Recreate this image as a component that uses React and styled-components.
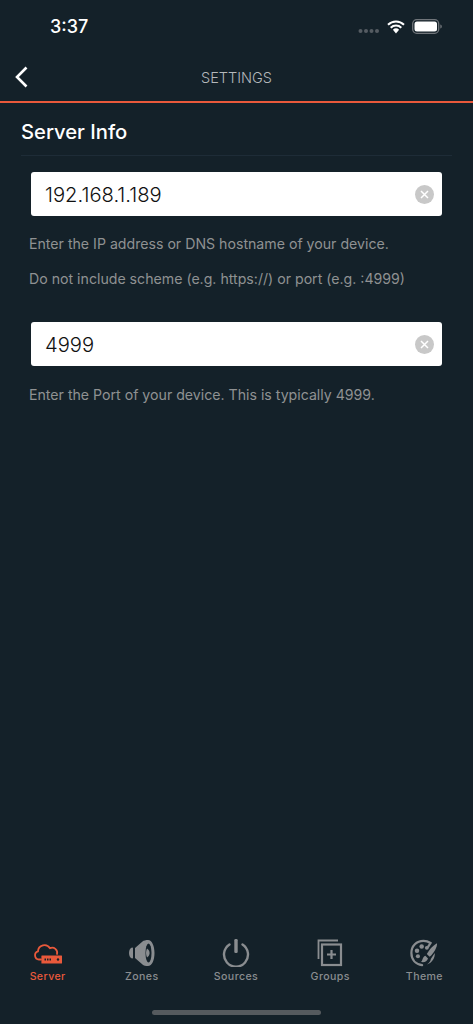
import React from 'react'
import styled, { createGlobalStyle } from 'styled-components'

const GlobalStyle = createGlobalStyle`
html, body {
  margin: 0;
  padding: 0;
  background: #142129;
}
* {
  box-sizing: border-box;
}
`

const Screen = styled.div`
width: 473px;
height: 1024px;
background: #142129;
color: #fff;
font-family: Inter, "Liberation Sans", sans-serif;
display: flex;
flex-direction: column;
overflow: hidden;
`

// --status bar --
const StatusBar = styled.div`
height: 53px;
flex-shrink: 0;
display: flex;
align-items: center;
justify-content: space-between;
padding: 0 31px 0 50px;
`
const Time = styled.span`
font-size: 18px;
font-weight: 500;
`
const StatusIcons = styled.div`
display: flex;
align-items: center;
gap: 7px;
`
const SignalDots = styled.svg`
margin-top: 8px;
`

// --nav bar --
const NavBar = styled.div`
height: 50px;
flex-shrink: 0;
display: flex;
align-items: center;
justify-content: center;
position: relative;
border-bottom: 2.5px solid #e9593b;
`
const BackButton = styled.svg`
position: absolute;
left: 14px;
top: 11px;
`
const NavTitle = styled.span`
font-size: 14.5px;
font-weight: 300;
color: #b4b8bb;
`

// --content --
const Content = styled.div`
flex: 1;
padding: 0 21px;
`
const Heading = styled.div`
height: 53px;
display: flex;
align-items: center;
padding-top: 4px;
font-size: 20.2px;
font-weight: 500;
border-bottom: 1px solid #1e2c37;
`
const Field = styled.div`
margin: ${props => props.$top}px 10px 0;
height: 44px;
background: #fff;
border-radius: 3px;
display: flex;
align-items: center;
padding: 0 8px 0 14px;
`
const FieldInput = styled.input`
flex: 1;
min-width: 0;
border: 0;
outline: 0;
padding: 0;
background: transparent;
font-family: inherit;
font-size: 20.2px;
font-weight: 300;
color: #111;
`
const ClearButton = styled.span`
width: 19px;
height: 19px;
border-radius: 50%;
background: #c8c8c8;
display: flex;
align-items: center;
justify-content: center;
`
const Help = styled.p`
margin: ${props => props.$top}px 8px 0;
font-size: 14.15px;
line-height: 18px;
color: #8f9192;
`

// --tab bar --
const TabBar = styled.div`
height: 73.5px;
flex-shrink: 0;
display: flex;
padding: 0 1.5px 0 0.5px;
`
const Tab = styled.div`
flex: 1;
display: flex;
flex-direction: column;
align-items: center;
justify-content: flex-end;
gap: 3px;
color: ${props => (props.$active ? '#e9593b' : '#8a8d90')};
`
const TabIcon = styled.svg`
display: block;
`
const TabLabel = styled.span`
font-size: 10.6px;
font-weight: 500;
letter-spacing: 0.4px;
line-height: 13px;
`
const HomeArea = styled.div`
height: 41.5px;
flex-shrink: 0;
display: flex;
justify-content: center;
padding-top: 27.5px;
`
const HomeBar = styled.div`
width: 169px;
height: 5px;
border-radius: 3px;
background: #555a5e;
`

const ServerIcon = () => (
    <TabIcon width="30" height="24" viewBox="0 0 30 24">
        <path d="M8 16.500H6A4.200 4.200 0 0 1 5 8.300 6.500 6.500 0 0 1 17 5.200 5 5 0 0 1 24 11" fill="none" stroke="currentColor" strokeWidth="1.800" strokeLinecap="round" />
        <rect x="8.400" y="12.500" width="20.600" height="8" rx="0.500" fill="currentColor" />
        <rect x="11.500" y="15.500" width="1.500" height="2" fill="#142129" />
        <rect x="14" y="15.500" width="1.500" height="2" fill="#142129" />
        <rect x="16.500" y="15.500" width="1.500" height="2" fill="#142129" />
        <circle cx="25" cy="16.500" r="1.200" fill="#142129" />
    </TabIcon>
)

const ZonesIcon = () => (
    <TabIcon width="30" height="28" viewBox="1 0 30 28">
        <path d="M6 8.500c-2 .5-3 3-3 5.500s1 5 3 5.500c.6 0 1-.4 1-1V9.500c0-.6-.4-1-1-1z" fill="currentColor" />
        <path d="M9 9l7.500-6.500C17.500 1.500 20 1 22 1c4 0 6.500 6 6.500 13S26 27 22 27c-2 0-4.500-.5-5.500-1.500L9 19z" fill="currentColor" />
        <ellipse cx="22.500" cy="14" rx="3" ry="9.500" fill="#142129" />
        <path d="M21 9.500c1.800 1 2.600 2.800 2.600 4.500s-.8 3.500-2.600 4.500c-.6-1.300-1-2.900-1-4.500s.4-3.200 1-4.500z" fill="currentColor" />
    </TabIcon>
)

const SourcesIcon = () => (
    <TabIcon width="30" height="28" viewBox="0 0 30 28">
        <path d="M8.500 5.500a12 12 0 1 0 13 0" fill="none" stroke="currentColor" strokeWidth="2.400" strokeLinecap="round" />
        <rect x="13.300" y="0" width="3.400" height="14" rx="1.200" fill="currentColor" />
    </TabIcon>
)

const GroupsIcon = () => (
    <TabIcon width="30" height="28" viewBox="1 0 30 28">
        <path d="M4.500 20V1.500H24" fill="none" stroke="currentColor" strokeWidth="1.800" />
        <rect x="8" y="5.500" width="19" height="20.500" fill="none" stroke="currentColor" strokeWidth="2.200" />
        <path d="M17.500 11v9M13 15.500h9" fill="none" stroke="currentColor" strokeWidth="2.200" />
    </TabIcon>
)

const ThemeIcon = () => (
    <TabIcon width="28" height="28" viewBox="0 0 30 30">
        <path d="M13 28C6 27 1.500 22 1.500 15 1.500 7.500 7 2 14.500 2c3 0 5.500 1 7.500 2.300L19 9" fill="none" stroke="currentColor" strokeWidth="2.400" strokeLinecap="round" />
        <circle cx="7.500" cy="12.500" r="2.400" fill="currentColor" />
        <circle cx="12.500" cy="8" r="2.400" fill="currentColor" />
        <circle cx="18" cy="9.500" r="2" fill="currentColor" />
        <circle cx="8.500" cy="18.500" r="2.200" fill="currentColor" />
        <path d="M29 4.500c.3 4-3.500 11-8 14.500l-3-2.800C20.500 11 25.500 6.500 29 4.500z" fill="currentColor" />
        <path d="M16.500 18l2.800 2.800c-1 3-3.800 4.800-7.800 3.700 2.500-.8 1.500-5.500 5-6.500z" fill="currentColor" />
        <path d="M26.500 15c.5 5-2.500 10.500-8.500 12.300 3-2 4-4 4.300-6z" fill="currentColor" />
    </TabIcon>
)

const ClearIcon = () => (
    <ClearButton>
        <svg width="9" height="9" viewBox="0 0 9 9">
            <path d="M1 1l7 7M8 1L1 8" stroke="#fff" strokeWidth="1.500" />
        </svg>
    </ClearButton>
)

const tabs = [
    { label: 'Server', Icon: ServerIcon, active: true },
    { label: 'Zones', Icon: ZonesIcon },
    { label: 'Sources', Icon: SourcesIcon },
    { label: 'Groups', Icon: GroupsIcon },
    { label: 'Theme', Icon: ThemeIcon },
]

const App = () => {
    return (
        <Screen>
            <GlobalStyle />
            <StatusBar>
                <Time>3:37</Time>
                <StatusIcons>
                    <SignalDots width="22" height="6" viewBox="0 0 22 6">
                        <circle cx="2.500" cy="3" r="2" fill="#555c62" />
                        <circle cx="8" cy="3" r="2" fill="#555c62" />
                        <circle cx="13.500" cy="3" r="2" fill="#555c62" />
                        <circle cx="19" cy="3" r="2" fill="#555c62" />
                    </SignalDots>
                    <svg width="18" height="14" viewBox="0 0 18 14">
                        <path d="M1 4.800a11.500 11.500 0 0 1 16 0M3.700 7.700a7.600 7.600 0 0 1 10.600 0" fill="none" stroke="#fff" strokeWidth="2" />
                        <path d="M5.900 9.800a4.500 4.500 0 0 1 6.200 0L9 13.500z" fill="#fff" />
                    </svg>
                    <svg width="30" height="15" viewBox="0 0 30 15">
                        <rect x="0.700" y="0.700" width="26" height="13.600" rx="4" fill="none" stroke="#70757a" strokeWidth="1.300" />
                        <rect x="2.500" y="2.500" width="22.500" height="10" rx="2.500" fill="#fff" />
                        <path d="M28.300 5.500c1 .3 1.500 1.100 1.500 2s-.5 1.700-1.500 2z" fill="#70757a" />
                    </svg>
                </StatusIcons>
            </StatusBar>
            <NavBar>
                <BackButton width="16" height="26" viewBox="0 0 16 26">
                    <path d="M12.500 3.500L3 13l9.500 9.500" fill="none" stroke="#fff" strokeWidth="2.600" />
                </BackButton>
                <NavTitle>SETTINGS</NavTitle>
            </NavBar>
            <Content>
                <Heading>Server Info</Heading>
                <Field $top={16}>
                    <FieldInput defaultValue="192.168.1.189" readOnly />
                    <ClearIcon />
                </Field>
                <Help $top={19}>Enter the IP address or DNS hostname of your device.</Help>
                <Help $top={17}>Do not include scheme (e.g. https://) or port (e.g. :4999)</Help>
                <Field $top={34}>
                    <FieldInput defaultValue="4999" readOnly />
                    <ClearIcon />
                </Field>
                <Help $top={20}>Enter the Port of your device. This is typically 4999.</Help>
            </Content>
            <TabBar>
                {tabs.map(({ label, Icon, active }) => (
                    <Tab key={label} $active={active}>
                        <Icon />
                        <TabLabel>{label}</TabLabel>
                    </Tab>
                ))}
            </TabBar>
            <HomeArea>
                <HomeBar />
            </HomeArea>
        </Screen>
    )
}

export default App
